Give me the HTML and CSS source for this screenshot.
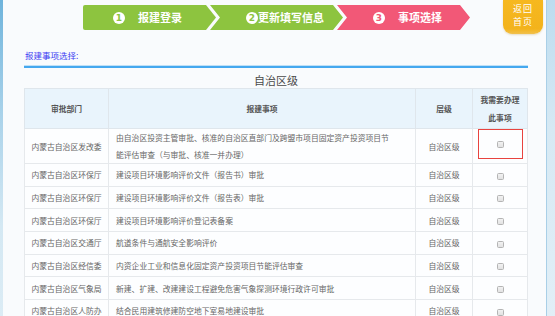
FILE: index.html
```html
<!DOCTYPE html>
<html lang="zh-CN">
<head>
    <meta charset="UTF-8">
    <title>报建事项选择</title>
    <link rel="stylesheet" href="styles.css">
</head>
<body>
    <div class="frame">
        <div class="edge-left"></div>

        <div class="page">
            <!-- Step bar -->
            <header class="topbar">
                <ol class="steps">
                    <li class="step step-done step-first"><span class="step-num">1</span><span class="step-gap">报建登录</span></li>
                    <li class="step step-done"><span class="step-num">2</span>更新填写信息</li>
                    <li class="step step-current"><span class="step-num">3</span><span class="step-gap">事项选择</span></li>
                </ol>
                <a href="#" class="home-btn">返回<br>首页</a>
            </header>

            <p class="section-label">报建事项选择:</p>

            <!-- Items -->
            <section class="section">
                <h2 class="level-title">自治区级</h2>
                <table class="items">
                    <colgroup>
                        <col class="col-dept">
                        <col class="col-item">
                        <col class="col-level">
                        <col class="col-check">
                    </colgroup>
                    <thead>
                        <tr>
                            <th>审批部门</th>
                            <th>报建事项</th>
                            <th>层级</th>
                            <th>我需要办理<br>此事项</th>
                        </tr>
                    </thead>
                    <tbody>
                        <tr>
                            <td class="dept">内蒙古自治区发改委</td>
                            <td class="item">由自治区投资主管审批、核准的自治区直部门及跨盟市项目固定资产投资项目节<br>能评估审查（与审批、核准一并办理）</td>
                            <td class="level">自治区级</td>
                            <td class="check check-marked"><div class="mark-box"><input type="checkbox" class="pick"></div></td>
                        </tr>
                        <tr>
                            <td class="dept">内蒙古自治区环保厅</td>
                            <td class="item">建设项目环境影响评价文件（报告书）审批</td>
                            <td class="level">自治区级</td>
                            <td class="check"><input type="checkbox" class="pick"></td>
                        </tr>
                        <tr>
                            <td class="dept">内蒙古自治区环保厅</td>
                            <td class="item">建设项目环境影响评价文件（报告表）审批</td>
                            <td class="level">自治区级</td>
                            <td class="check"><input type="checkbox" class="pick"></td>
                        </tr>
                        <tr>
                            <td class="dept">内蒙古自治区环保厅</td>
                            <td class="item">建设项目环境影响评价登记表备案</td>
                            <td class="level">自治区级</td>
                            <td class="check"><input type="checkbox" class="pick"></td>
                        </tr>
                        <tr>
                            <td class="dept">内蒙古自治区交通厅</td>
                            <td class="item">航道条件与通航安全影响评价</td>
                            <td class="level">自治区级</td>
                            <td class="check"><input type="checkbox" class="pick"></td>
                        </tr>
                        <tr>
                            <td class="dept">内蒙古自治区经信委</td>
                            <td class="item">内资企业工业和信息化固定资产投资项目节能评估审查</td>
                            <td class="level">自治区级</td>
                            <td class="check"><input type="checkbox" class="pick"></td>
                        </tr>
                        <tr>
                            <td class="dept">内蒙古自治区气象局</td>
                            <td class="item">新建、扩建、改建建设工程避免危害气象探测环境行政许可审批</td>
                            <td class="level">自治区级</td>
                            <td class="check"><input type="checkbox" class="pick"></td>
                        </tr>
                        <tr>
                            <td class="dept">内蒙古自治区人防办</td>
                            <td class="item">结合民用建筑修建防空地下室易地建设审批</td>
                            <td class="level">自治区级</td>
                            <td class="check"><input type="checkbox" class="pick"></td>
                        </tr>
                    </tbody>
                </table>
            </section>
        </div>

        <div class="edge-right"></div>
    </div>
</body>
</html>
```

FILE: styles.css
```css
* {
    margin: 0;
    padding: 0;
    box-sizing: border-box;
}

html, body {
    height: 100%;
    overflow: hidden;
}

body {
    font-family: "Noto Sans CJK SC", "Noto Sans", sans-serif;
    background: #f9fbfd;
    color: #666;
}

.frame {
    display: flex;
    min-height: 100vh;
}

.edge-left {
    width: 3px;
    flex-shrink: 0;
    background: linear-gradient(180deg, #6fb4dc 0%, #a9d2ea 35%, #d4e8f3 70%, #dcecf5 100%);
}

.edge-right {
    width: 9px;
    flex-shrink: 0;
    border-left: 1px solid #a9cfe7;
    background: linear-gradient(180deg, #bcdcef 0%, #d6e9f4 40%, #e2eff7 100%);
}

.page {
    flex: 1;
    background: #f9fbfd;
}

/* Step bar */
.topbar {
    display: flex;
    align-items: flex-start;
    padding: 0 3px 0 80px;
    height: 34px;
}

.steps {
    list-style: none;
    display: flex;
    margin-top: 5px;
}

.step {
    width: 133px;
    height: 25px;
    display: flex;
    align-items: center;
    padding-left: 36px;
    margin-left: -6px;
    color: #fff;
    font-size: 11px;
    font-weight: bold;
    line-height: 25px;
    clip-path: polygon(0 0, calc(100% - 10px) 0, 100% 50%, calc(100% - 10px) 100%, 0 100%, 10px 50%);
}

.step-first {
    margin-left: 0;
    padding-left: 30px;
    border-radius: 2px 0 0 2px;
    clip-path: polygon(0 0, calc(100% - 10px) 0, 100% 50%, calc(100% - 10px) 100%, 0 100%);
}

.step-done {
    background: #8dc43f;
}

.step-current {
    background: #f25877;
}

.step-num {
    display: inline-flex;
    align-items: center;
    justify-content: center;
    width: 12px;
    height: 12px;
    border-radius: 50%;
    background: #fff;
    font-size: 9px;
    line-height: 12px;
    font-family: "DejaVu Sans", sans-serif;
}

.step-done .step-num {
    color: #8dc43f;
}

.step-current .step-num {
    color: #f25877;
}

.step-gap {
    margin-left: 13px;
}

.home-btn {
    margin-left: auto;
    width: 40px;
    height: 34px;
    padding-top: 2px;
    background: linear-gradient(180deg, #f6b81f 0%, #f3b31c 85%, #f1c04d 100%);
    border-radius: 0 0 9px 9px;
    box-shadow: 0 1px 2px rgba(180, 130, 20, 0.25);
    color: #fff;
    font-size: 9px;
    line-height: 13px;
    text-align: center;
    text-decoration: none;
    letter-spacing: 1px;
}

.section-label {
    margin: 15px 0 0 22px;
    font-size: 8.5px;
    line-height: 12px;
    color: #3b3bf2;
}

/* Items */
.section {
    margin: 5px 18px 0 21px;
    border-top: 2px solid #45a8ef;
    box-shadow: 0 -1px 0 #bfe0f7;
}

.level-title {
    margin: 5px 0 1px;
    text-align: center;
    font-size: 11px;
    font-weight: normal;
    line-height: 14px;
    color: #4a4a4a;
}

.items {
    width: 100%;
    table-layout: fixed;
    border-collapse: collapse;
    background: #fdfeff;
    border: 1px solid #e3e7eb;
    font-size: 7.8px;
}

.col-dept { width: 84px; }
.col-level { width: 57px; }
.col-check { width: 55px; }

.items th {
    height: 40px;
    padding: 1px 0;
    background: #e9f4fc;
    border: 1px solid #dfe6ec;
    color: #555;
    font-weight: bold;
    line-height: 18px;
    text-align: center;
}

.items td {
    height: 22.67px;
    padding: 0;
    border: 1px solid #e6e9ec;
    line-height: 17px;
    color: #666;
    vertical-align: middle;
}

.items .dept,
.items .level,
.items .check {
    text-align: center;
}

.items .item {
    padding-left: 7px;
}

.items .check-marked {
    vertical-align: top;
}

.mark-box {
    width: 45px;
    height: 30px;
    margin: 0 auto;
    border: 1.5px solid #e8433f;
    display: flex;
    align-items: center;
    justify-content: center;
}

.pick {
    appearance: none;
    -webkit-appearance: none;
    display: inline-block;
    width: 7px;
    height: 7px;
    border: 1px solid #b4b4b4;
    border-radius: 1.5px;
    background: linear-gradient(180deg, #f2f2f2 0%, #e2e2e2 100%);
    vertical-align: middle;
}
```
